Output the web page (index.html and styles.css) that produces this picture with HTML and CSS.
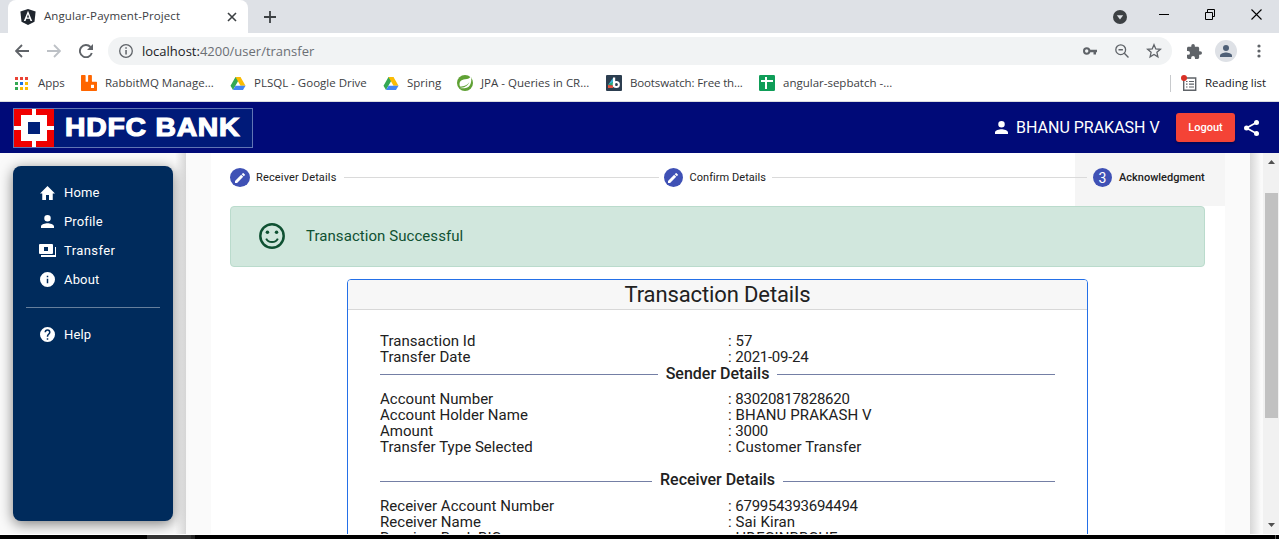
FILE: index.html
```html
<!DOCTYPE html>
<html lang="en">
<head>
<meta charset="utf-8">
<title>Angular-Payment-Project</title>
<link rel="stylesheet" href="styles.css">
</head>
<body>
<div class="browser">
  <div class="tabstrip">
    <div class="tab">
      <svg class="tab-icon" width="16" height="16" viewBox="0 0 16 16"><path d="M8 0l7.6 2.6-1.1 10.2L8 16l-6.500-3.200L.4 2.600z" fill="#20262e"/><path d="M8 1.800L3.800 12h1.700l.9-2.200h3.200l.9 2.200h1.700zM8 5.200l1.100 3.200H6.900z" fill="#fff"/></svg>
      <span class="tab-title">Angular-Payment-Project</span>
      <svg class="tab-close" width="10" height="10" viewBox="0 0 10 10"><path d="M1 1l8 8M9 1L1 9" stroke="#3c4043" stroke-width="1.600"/></svg>
    </div>
    <svg class="tab-new" width="12" height="12" viewBox="0 0 12 12"><path d="M6 0v12M0 6h12" stroke="#3c4043" stroke-width="1.800"/></svg>
    <div class="window-controls">
      <svg width="14" height="14" viewBox="0 0 14 14"><circle cx="7" cy="7" r="7" fill="#3c4043"/><path d="M3.800 5.200h6.400L7 9.400z" fill="#dee1e6"/></svg>
      <svg class="win-min" width="10" height="11" viewBox="0 0 10 11"><path d="M0 5.500h10" stroke="#000"/></svg>
      <svg class="win-max" width="10" height="11" viewBox="0 0 10 11"><path d="M.5 3.500h7v7h-7zM2.500 3.500v-3h7v7h-2" fill="none" stroke="#000"/></svg>
      <svg class="win-close" width="11" height="11" viewBox="0 0 11 11"><path d="M.5.5l10 10M10.500.5l-10 10" stroke="#000" stroke-width="1.100"/></svg>
    </div>
  </div>
  <div class="toolbar">
    <svg width="14" height="14" viewBox="0 0 14 14"><path d="M14 7H1.500M7 1L1 7l6 6" fill="none" stroke="#5f6368" stroke-width="1.800"/></svg>
    <svg class="nav-forward" width="14" height="14" viewBox="0 0 14 14"><path d="M0 7h12.500M7 1l6 6-6 6" fill="none" stroke="#bdc1c6" stroke-width="1.800"/></svg>
    <svg class="nav-reload" width="14" height="14" viewBox="0 0 14 14"><path d="M12.800 9A6.100 6.100 0 1 1 11.500 3" fill="none" stroke="#5f6368" stroke-width="1.900"/><path d="M14 0v6H8z" fill="#5f6368"/></svg>
    <div class="omnibox">
      <svg width="14" height="14" viewBox="0 0 14 14"><circle cx="7" cy="7" r="6.300" fill="none" stroke="#5f6368" stroke-width="1.300"/><path d="M6.300 6h1.500v4.500H6.300zM6.300 3.300h1.500v1.500H6.300z" fill="#5f6368"/></svg>
      <span class="url"><b>localhost:</b>4200/user/transfer</span>
      <span class="omnibox-actions">
        <svg width="14" height="8" viewBox="0 0 14 8"><circle cx="3.700" cy="4" r="2.700" fill="none" stroke="#5f6368" stroke-width="2"/><path d="M6 2.800h8v2.400h-1V7.500h-2.500V5.200H6z" fill="#5f6368"/></svg>
        <svg width="14" height="14" viewBox="0 0 14 14"><circle cx="5.700" cy="5.700" r="4.900" fill="none" stroke="#5f6368" stroke-width="1.300"/><path d="M9.300 9.300l4.200 4.200M3.500 5.700h4.400" stroke="#5f6368" stroke-width="1.400"/></svg>
        <svg width="16" height="16" viewBox="0 0 16 16"><path d="M8 1.700l1.800 4.200 4.600.4-3.500 3 1 4.500L8 11.400l-3.900 2.400 1-4.500-3.500-3 4.600-.4z" fill="none" stroke="#5f6368" stroke-width="1.300"/></svg>
      </span>
    </div>
    <svg class="ext" width="15" height="15" viewBox="2 1 21 21"><path d="M20.500 11H19V7c0-1.100-.9-2-2-2h-4V3.500a2.500 2.500 0 0 0-5 0V5H4c-1.100 0-2 .9-2 2v3.800h1.500a2.700 2.700 0 0 1 0 5.400H2V20c0 1.100.9 2 2 2h3.800v-1.500a2.700 2.700 0 0 1 5.400 0V22H17c1.100 0 2-.9 2-2v-4h1.500a2.500 2.500 0 0 0 0-5z" fill="#5f6368"/></svg>
    <svg class="avatar" width="22" height="22" viewBox="0 0 22 22"><circle cx="11" cy="11" r="11" fill="#dee1e6"/><circle cx="11" cy="8" r="3" fill="#4f6077"/><path d="M5 17v-1.500c0-2 4-3 6-3s6 1 6 3V17z" fill="#4f6077"/></svg>
    <svg class="kebab" width="4" height="14" viewBox="0 0 4 14"><g fill="#5f6368"><circle cx="2" cy="2" r="1.600"/><circle cx="2" cy="7" r="1.600"/><circle cx="2" cy="12" r="1.600"/></g></svg>
  </div>
  <div class="bookmarks">
    <svg width="13" height="13" viewBox="0 0 13 13"><path d="M0 0h3v3H0zM5 0h3v3H5zM10 0h3v3h-3z" fill="#ea4335"/><path d="M0 5h3v3H0z" fill="#34a853"/><path d="M5 5h3v3H5z" fill="#1a73e8"/><path d="M10 5h3v3h-3zM10 10h3v3h-3zM5 10h3v3H5z" fill="#fbbc04"/><path d="M0 10h3v3H0z" fill="#34a853"/></svg>
    <span class="bm bm-apps">Apps</span>
    <svg width="16" height="16" viewBox="0 0 16 16"><path d="M0 .8Q0 0 .8 0h3q.8 0 .8.800v5.400q0 .5.500.5h1.500q.5 0 .5-.5V.8q0-.8.800-.8h2.200q.8 0 .8.800v5.400q0 .5.500.5h4q.6 0 .6.600V15.300q0 .7-.7.700H.7Q0 16 0 15.300z" fill="#f60"/><path d="M10 9.800h3V13h-3z" fill="#fff"/></svg>
    <span class="bm bm-rabbit">RabbitMQ Manage...</span>
    <svg width="16" height="13" viewBox="-.5 0 16 13"><path d="M5 0h5L7.500 4.300 2.500 13 0 8.700z" fill="#34a853"/><path d="M5 0h5l5 8.700h-5z" fill="#fbbc04"/><path d="M5 8.700h10L12.500 13h-10z" fill="#4285f4"/></svg>
    <span class="bm bm-sql">PLSQL - Google Drive</span>
    <svg width="16" height="13" viewBox="-.5 0 16 13"><path d="M5 0h5L7.500 4.300 2.500 13 0 8.700z" fill="#34a853"/><path d="M5 0h5l5 8.700h-5z" fill="#fbbc04"/><path d="M5 8.700h10L12.500 13h-10z" fill="#4285f4"/></svg>
    <span class="bm bm-spring">Spring</span>
    <svg width="16" height="16" viewBox="0 0 16 16"><circle cx="8" cy="8" r="8" fill="#5fa134"/><path d="M14 1.500c1 5.500-.5 10.800-5.300 11.500-2 .3-4 .2-6-.1 4-.3 8-1.500 9.700-6C10 10.500 7 11.300 3 11.600 1.500 7 4 4.500 8 4.200c3-.2 4.800-1 6-2.700z" fill="#fff"/></svg>
    <span class="bm bm-jpa">JPA - Queries in CR...</span>
    <svg width="16" height="16" viewBox="0 0 16 16"><rect width="16" height="16" rx="1" fill="#2c3e50"/><path d="M7 3v5L2 10z" fill="#3bb4d8"/><path d="M2 9.500L7 7v3.500z" fill="#2aa876"/><path d="M2 10l5 .5V13H2z" fill="#e8553d"/><path d="M7 2.500h2.200v9H7z" fill="#fff"/><circle cx="10.300" cy="9.500" r="2.600" fill="none" stroke="#fff" stroke-width="2"/></svg>
    <span class="bm bm-boot">Bootswatch: Free th...</span>
    <svg width="16" height="16" viewBox="0 0 16 16"><rect width="16" height="16" rx="1.200" fill="#0f9d58"/><path d="M7 2v12M2 6h12" stroke="#fff" stroke-width="2"/></svg>
    <span class="bm bm-ang">angular-sepbatch -...</span>
    <div class="reading">
      <svg width="16" height="17" viewBox="0 0 16 17"><path d="M2.700 3h12v12.300h-12z" fill="none" stroke="#5f6368" stroke-width="1.400"/><path d="M5 6.500h1.500M8 6.500h5M5 9.200h1.500M8 9.200h5M5 12h1.500M8 12h5" stroke="#5f6368" stroke-width="1.200"/><circle cx="3" cy="3" r="3" fill="#d93025"/></svg>
      <span class="bm bm-read">Reading list</span>
    </div>
  </div>
</div>

<header class="appbar">
  <div class="logo">
    <svg width="40" height="38" viewBox="0 0 40 38"><path d="M0 0h40v38H0z" fill="#f00000"/><path d="M18 0h4v38h-4zM0 17h40v4H0zM7 6h26v26H7z" fill="#fff"/><path d="M14 13h12v12H14z" fill="#00217a"/></svg>
    <span class="logo-text">HDFC BANK</span>
  </div>
  <div class="account">
    <svg width="13" height="13" viewBox="4 4 16 16"><path d="M12 12a4 4 0 1 0 0-8 4 4 0 0 0 0 8zm0 2c-2.700 0-8 1.300-8 4v2h16v-2c0-2.700-5.300-4-8-4z" fill="#fff"/></svg>
    <span class="user">BHANU PRAKASH V</span>
    <button class="logout">Logout</button>
    <svg width="15" height="16" viewBox="0 0 15 16"><path d="M12.500 2.500L2.500 8l10 5.500" fill="none" stroke="#fff" stroke-width="1.700"/><g fill="#fff"><circle cx="12.500" cy="2.500" r="2.500"/><circle cx="2.500" cy="8" r="2.500"/><circle cx="12.500" cy="13.500" r="2.500"/></g></svg>
  </div>
</header>

<div class="shell">
  <aside class="side">
    <nav class="menu">
      <a class="item"><svg viewBox="2 3 20 17" width="15" height="14" preserveAspectRatio="none"><path d="M10 20v-6h4v6h5v-8h3L12 3 2 12h3v8z"/></svg><span>Home</span></a>
      <a class="item"><svg viewBox="4 4 16 16" width="13" height="13"><path d="M12 12a4 4 0 1 0 0-8 4 4 0 0 0 0 8zm0 2c-2.700 0-8 1.300-8 4v2h16v-2c0-2.700-5.300-4-8-4z"/></svg><span>Profile</span></a>
      <a class="item"><svg viewBox="0 0 17 13" width="17" height="13"><path d="M1 0h12q1 0 1 1v8q0 1-1 1H1q-1 0-1-1V1q0-1 1-1zm4 3v4h4V3zM16 3h1v10H2v-2h14z" fill-rule="evenodd"/></svg><span class="t-transfer">Transfer</span></a>
      <a class="item"><svg viewBox="2 2 20 20" width="15" height="15"><path d="M12 2a10 10 0 1 0 0 20 10 10 0 0 0 0-20zm1 15h-2v-6h2zm0-8h-2V7h2z"/></svg><span>About</span></a>
      <hr class="menu-rule">
      <a class="item"><svg viewBox="2 2 20 20" width="15" height="15"><path d="M12 2a10 10 0 1 0 0 20 10 10 0 0 0 0-20zm1 17h-2v-2h2zm2.070-7.750l-.9.920C13.450 12.900 13 13.500 13 15h-2v-.5c0-1.100.45-2.100 1.170-2.830l1.240-1.260c.37-.36.590-.86.590-1.410a2 2 0 0 0-4 0H8a4 4 0 0 1 8 0c0 .88-.36 1.680-.93 2.250z"/></svg><span>Help</span></a>
    </nav>
  </aside>
  <main class="main">
    <section class="page">
      <div class="stepper">
        <div class="step"><i class="dot"><svg viewBox="3 3 18 18" width="10" height="10"><path d="M3 17.250V21h3.750L17.800 9.940l-3.750-3.750zM20.700 7.040a1 1 0 0 0 0-1.410l-2.340-2.340a1 1 0 0 0-1.410 0l-1.830 1.830 3.750 3.750z"/></svg></i><span>Receiver Details</span></div>
        <div class="line line-a"></div>
        <div class="step step-confirm"><i class="dot"><svg viewBox="3 3 18 18" width="10" height="10"><path d="M3 17.250V21h3.750L17.800 9.940l-3.750-3.750zM20.700 7.040a1 1 0 0 0 0-1.410l-2.340-2.340a1 1 0 0 0-1.410 0l-1.830 1.830 3.750 3.750z"/></svg></i><span>Confirm Details</span></div>
        <div class="line line-b"></div>
        <div class="step step-on"><i class="line-end"></i><i class="dot">3</i><span>Acknowledgment</span></div>
      </div>
      <div class="alert">
        <svg viewBox="2 2 20 20" width="26" height="26"><circle cx="12" cy="12" r="9" fill="none" stroke="#0f5132" stroke-width="1.900"/><circle cx="8.500" cy="9.200" r="1.350"/><circle cx="15.500" cy="9.200" r="1.350"/><path d="M7.500 14c.8 1.600 2.500 2.600 4.500 2.600s3.700-1 4.500-2.600" fill="none" stroke="#0f5132" stroke-width="1.500"/></svg>
        <span>Transaction Successful</span>
      </div>
      <div class="card">
        <h1 class="card-title">Transaction Details</h1>
        <div class="card-body">
          <dl class="rows">
            <dt>Transaction Id</dt><dd>: 57</dd>
            <dt>Transfer Date</dt><dd class="num">: 2021-09-24</dd>
          </dl>
          <h2 class="divider"><span>Sender Details</span></h2>
          <dl class="rows rows-sender">
            <dt>Account Number</dt><dd class="num">: 83020817828620</dd>
            <dt>Account Holder Name</dt><dd>: BHANU PRAKASH V</dd>
            <dt>Amount</dt><dd class="num">: 3000</dd>
            <dt>Transfer Type Selected</dt><dd>: Customer Transfer</dd>
          </dl>
          <h2 class="divider divider-receiver"><span>Receiver Details</span></h2>
          <dl class="rows rows-receiver">
            <dt>Receiver Account Number</dt><dd class="num">: 679954393694494</dd>
            <dt>Receiver Name</dt><dd>: Sai Kiran</dd>
            <dt>Receiver Bank BIC</dt><dd>: HDFCINBBCHE</dd>
          </dl>
        </div>
      </div>
    </section>
  </main>
  <div class="scrollbar">
    <svg width="7" height="4" viewBox="0 0 7 4"><path d="M0 4L3.500 0 7 4z" fill="#505050"/></svg>
    <div class="thumb"></div>
    <svg class="down" width="7" height="4" viewBox="0 0 7 4"><path d="M0 0l3.500 4L7 0z" fill="#505050"/></svg>
  </div>
</div>
<div class="taskbar"><div class="task"></div><div class="task-end"></div></div>
</body>
</html>
```
FILE: styles.css
```css
* { box-sizing: border-box; }
body { margin: 0; width: 1279px; height: 539px; overflow: hidden; display: flex; flex-direction: column; font-family: Roboto, sans-serif; color: #212121; background: #fafafa; }
svg { display: block; flex: none; }
span { white-space: nowrap; }
.browser { height: 102px; flex: none; background: #fff; border-bottom: 1px solid #dadce0; font-family: "Open Sans", sans-serif; font-size: 12px; color: #3c4043; }
.tabstrip { height: 33px; background: #dee1e6; display: flex; align-items: center; padding-left: 8px; }
.tab { width: 240px; height: 33px; background: #fff; border-radius: 8px 8px 0 0; display: flex; align-items: center; padding: 0 11px 0 12px; }
.tab-title { margin-left: 8px; flex: 1; font-size: 11.500px; letter-spacing: .1px; line-height: 14px; padding-bottom: 1px; }
.tab-new { margin-left: 16px; }
.window-controls { margin-left: auto; display: flex; align-items: center; padding-right: 17px; height: 31px; }
.win-min { margin: -5px 0 0 32px; }
.win-max { margin: -5px 0 0 36px; }
.win-close { margin: -5px 0 0 36px; }
.toolbar { height: 36px; display: flex; align-items: center; padding-left: 15px; }
.nav-forward { margin-left: 18px; }
.nav-reload { margin-left: 18px; }
.omnibox { margin-left: 15px; width: 1064px; height: 28px; border-radius: 14px; background: #f1f3f4; display: flex; align-items: center; padding: 0 10px 0 11px; }
.url { margin-left: 9px; font-size: 13px; color: #6b6f74; }
.url b { font-weight: 400; color: #202124; }
.omnibox-actions { margin-left: auto; display: flex; align-items: center; gap: 17.500px; }
.ext { margin-left: 15px; }
.avatar { margin-left: 13px; }
.kebab { margin-left: 20px; }
.bookmarks { height: 32px; padding: 0 13px 4px 15px; display: flex; align-items: center; }
.bm { font-size: 11.500px; margin-left: 8px; line-height: 14px; padding-bottom: 1px; }
.bm-apps { width: 43px; margin-left: 10px; }
.bm-rabbit { width: 125px; }
.bm-sql { width: 129px; }
.bm-spring { width: 50px; }
.bm-jpa { width: 125px; }
.bm-boot { width: 129px; letter-spacing: -.13px; }
.reading { margin-left: auto; height: 17px; border-left: 1px solid #c8cacd; padding-left: 10px; display: flex; align-items: center; color: #202124; }
.bm-read { letter-spacing: -.05px; }
.appbar { height: 51px; flex: none; background: #000a78; display: flex; align-items: center; justify-content: space-between; padding: 0 20px 0 13px; }
.logo { width: 240px; height: 40px; border: 1px solid #6175b4; background: #001a79; display: flex; align-items: center; }
.logo-text { margin-left: 11px; color: #fff; font: 700 26px "Liberation Sans", sans-serif; -webkit-text-stroke: 1.200px #fff; letter-spacing: .7px; transform: scaleX(1.09); transform-origin: left; }
.account { display: flex; align-items: center; color: #fff; }
.user { margin-left: 8px; width: 160px; font-size: 16px; }
.logout { width: 59px; height: 29px; padding: 0; border: 0; border-radius: 3px; background: #f44336; color: #fff; font: 500 11px Roboto, sans-serif; margin-right: 9px; box-shadow: 0 2px 2px rgba(0,0,0,.25); }
.shell { flex: 1; min-height: 0; display: flex; background: #fafafa; overflow: hidden; }
.side { width: 186px; flex: none; padding: 13px; background: linear-gradient(90deg, transparent 175px, #d8d8d8 186px); }
.menu { height: 355px; border-radius: 8px; background: #002b5c; color: #fff; padding: 12px 13px; box-shadow: 0 3px 14px rgba(0,0,0,.5); display: flex; flex-direction: column; }
.item { height: 29px; display: grid; grid-template-columns: 17px auto; justify-items: center; justify-content: start; align-items: center; column-gap: 8px; padding-left: 13px; font-size: 13px; letter-spacing: .15px; fill: #fff; }
.item span { justify-self: start; }
.t-transfer { letter-spacing: .4px; }
.menu-rule { width: 134px; height: 1px; flex: none; border: 0; margin: 13px 0 12px; background: #667f9c; }
.main { position: relative; width: 1064px; flex: none; padding: 0 25px; }
.main::after { content: ""; position: absolute; left: 1064px; top: 0; bottom: 0; width: 11px; background: linear-gradient(90deg, #d8d8d8, #fafafa); }
.page { height: 381px; background: #fff; width: 1014px; display: flex; flex-direction: column; overflow: hidden; }
.stepper { height: 53px; flex: none; display: flex; align-items: center; font-size: 11px; letter-spacing: .15px; padding: 0 0 4px 19px; }
.step { display: flex; align-items: center; gap: 6px; }
.dot { width: 20px; height: 19px; border-radius: 50%; background: #3f51b5; color: #fff; fill: #fff; display: flex; align-items: center; justify-content: center; font-style: normal; font-size: 14px; }
.line { height: 1px; background: #dadada; }
.line-a { width: 315px; margin: 0 5px 0 7px; }
.step-confirm .dot { width: 19px; }
.step-confirm { gap: 7px; letter-spacing: .05px; }
.line-b { flex: 1; margin-left: 6px; }
.step-on { width: 150px; height: 53px; margin-bottom: -4px; padding-bottom: 4px; background: #f5f5f5; font-weight: 500; letter-spacing: 0; }
.step-on .dot { font-weight: 400; width: 19px; }
.step-on span { margin-left: 1px; }
.line-end { width: 12px; height: 1px; background: #dadada; }
.alert { width: 975px; height: 61px; flex: none; margin-left: 19px; border: 1px solid #badbcc; border-radius: 4px; background: #d1e7dd; color: #0f5132; fill: #0f5132; display: flex; align-items: center; gap: 21px; padding: 0 28px 2px; font-size: 15px; letter-spacing: .06px; }
.card { width: 741px; height: 420px; flex: none; margin: 12px 0 0 136px; border: 1px solid #2470e8; border-radius: 4px; }
.card-title { margin: 0; height: 30px; background: #f7f7f7; border-bottom: 1px solid #d8d8d8; text-align: center; font-size: 22px; line-height: 29px; font-weight: 400; letter-spacing: -.12px; border-radius: 3px 3px 0 0; }
.card-body { padding: 23px 32px; }
.rows { margin: 0; display: grid; grid-template-columns: 348px auto; font-size: 15px; line-height: 16px; letter-spacing: .03px; }
dd { margin: 0; letter-spacing: .1px; }
.num { letter-spacing: -.27px; word-spacing: .5px; }
.divider { margin: 0; height: 17px; font-size: 16px; line-height: 17px; font-weight: 500; display: flex; align-items: center; gap: 8px; }
.divider::before, .divider::after { content: ""; flex: 1; height: 1px; margin-top: 2px; background: #747fa5; }
.rows-sender { margin-top: 9px; }
.divider-receiver { margin-top: 16px; }
.divider-receiver::before, .divider-receiver::after { margin-top: 4px; }
.rows-receiver { margin-top: 10px; }
.scrollbar { margin-left: auto; width: 16px; background: #f1f1f1; display: flex; flex-direction: column; align-items: center; padding: 7px 0; }
.thumb { width: 13px; height: 225px; margin-top: 29px; background: #c1c1c1; }
.down { margin-top: auto; }
.taskbar { height: 5px; flex: none; background: #000; border-top: 1px solid #fff; display: flex; }
.task { width: 48px; margin-left: 147px; background: #333; border-right: 4px solid #222; }
.task-end { margin-left: auto; width: 1px; margin-right: 3px; background: #555; }
```
